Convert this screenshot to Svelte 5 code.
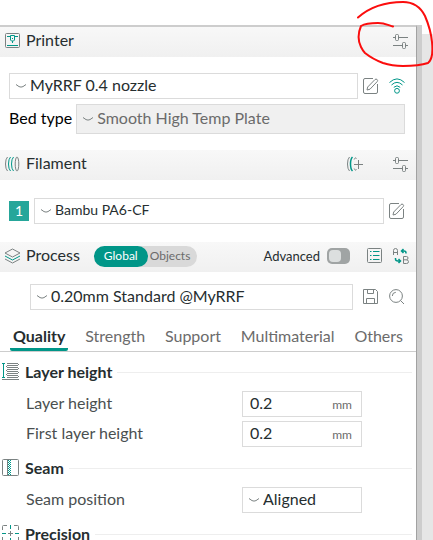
<script lang="ts">
	let printer = $state('MyRRF 0.4 nozzle');
	let bedType = $state('Smooth High Temp Plate');
	let filament = $state('Bambu PA6-CF');
	let preset = $state('0.20mm Standard @MyRRF');
	let seam = $state('Aligned');
	let layerHeight = $state('0.2');
	let firstLayerHeight = $state('0.2');
	let scope = $state('Global');
	let advanced = $state(false);
	let tab = $state('Quality');

	const tabs = ['Quality', 'Strength', 'Support', 'Multimaterial', 'Others'];
</script>

{#snippet chevron()}
	<svg width="12" height="8" viewBox="0 0 12 8"><path d="M1 2.5L4 4.6Q6 5.6 8 4.6L11 2.5" /></svg>
{/snippet}

{#snippet sliders()}
	<svg width="16" height="16" viewBox="0 0 16 16">
		<path d="M0 4.5H2.5M5.5 4.5H15M0 12.5H9.5M12.5 12.5H15" />
		<rect x="2.5" y="1.5" width="3" height="6" rx="1" />
		<rect x="9.5" y="9.5" width="3" height="6" rx="1" />
	</svg>
{/snippet}

{#snippet pencil()}
	<svg width="16" height="16" viewBox="0 0 16 16">
		<path d="M10 .5H2Q.5 .5 .5 2V14Q.5 15.5 2 15.5H13Q14.5 15.5 14.5 14V6" />
		<path d="M4 12L4.7 9L12 1.5Q13 .6 14.1 1.5Q15.1 2.6 14.2 3.6L7 11.2Z" />
	</svg>
{/snippet}

<div class="app">
	<main class="sidebar">
		<header class="bar">
			<svg width="16" height="16" viewBox="0 0 16 16">
				<rect x=".5" y=".5" width="14" height="14" rx="1" />
				<path class="teal" d="M2 3.5H5M10 3.5H13M2 12.5H13M5.5 2.5H9.5V7L8.5 8H6.5L5.5 7ZM7.5 8V10M7 5.5H8" />
			</svg>
			<h2>Printer</h2>
			<button class="icon end" aria-label="Printer settings">{@render sliders()}</button>
		</header>

		<section class="printer">
			<div class="row">
				<label class="select">
					{@render chevron()}
					<select bind:value={printer} aria-label="Printer"><option>MyRRF 0.4 nozzle</option></select>
				</label>
				<button class="icon" aria-label="Edit printer">{@render pencil()}</button>
				<button class="icon wifi" aria-label="Connection">
					<svg class="teal" width="16" height="16" viewBox="0 0 16 16">
						<path d="M.5 4.5Q8-2.7 15.5 4.5M2.5 7Q8 1.7 13.5 7M4.8 9.3Q8 6.3 11.2 9.3" />
						<circle cx="8" cy="12.8" r="2.4" />
					</svg>
				</button>
			</div>
			<div class="row bed">
				<label for="bed">Bed type</label>
				<div class="select muted">
					{@render chevron()}
					<select id="bed" bind:value={bedType}><option>Smooth High Temp Plate</option></select>
				</div>
			</div>
		</section>

		<header class="bar">
			<svg width="16" height="16" viewBox="0 0 16 16">
				<ellipse cx="12" cy="8" rx="1.8" ry="7" />
				<path d="M2.5 1Q.5 3 .5 8T2.5 15" />
				<path class="teal" d="M5.5 1Q3.5 3 3.5 8T5.5 15M8.5 1Q6.5 3 6.5 8T8.5 15" />
			</svg>
			<h2>Filament</h2>
			<button class="icon end add" aria-label="Add filament">
				<svg width="16" height="16" viewBox="0 0 16 16">
					<path d="M2.5 1Q.5 3 .5 8T2.5 15M9.5 2.5Q8.5 .5 7.2 3.5M7.2 12.5Q8.5 15.5 9.5 13.5M7 8.5H16M11.5 4V13" />
					<path class="teal bold" d="M5.5 1Q3.5 3 3.5 8T5.5 15" />
				</svg>
			</button>
			<button class="icon" aria-label="Filament settings">{@render sliders()}</button>
		</header>

		<section class="filament row">
			<span class="chip">1</span>
			<label class="select small">
				{@render chevron()}
				<select bind:value={filament} aria-label="Filament"><option>Bambu PA6-CF</option></select>
			</label>
			<button class="icon" aria-label="Edit filament">{@render pencil()}</button>
		</section>

		<header class="bar">
			<svg width="16" height="16" viewBox="0 0 16 16">
				<path d="M7.5 1L15 5L7.5 9L0 5Z" />
				<path class="teal" d="M0 8L7.5 12L15 8" />
				<path d="M0 11L7.5 15L15 11" />
			</svg>
			<h2>Process</h2>
			<div class="switch">
				{#each ['Global', 'Objects'] as name}
					<button class:active={scope === name} onclick={() => (scope = name)}>{name}</button>
				{/each}
			</div>
			<label class="advanced end">
				Advanced
				<input type="checkbox" bind:checked={advanced} />
			</label>
			<button class="icon list" aria-label="Parameter list">
				<svg width="16" height="16" viewBox="0 0 16 16">
					<rect x=".5" y=".5" width="14" height="14" rx="1" />
					<path class="teal" d="M3 3.5H4.5M6 3.5H12.5M3 7.5H4.5M6 7.5H12.5M3 11.5H4.5M6 11.5H12.5" />
				</svg>
			</button>
			<button class="icon" aria-label="Compare presets">
				<svg width="16" height="16" viewBox="0 0 16 16">
					<path d="M.5 7V2.5Q.5 .5 2.5 .5T4.5 2.5V7M.5 4.5H4.5M10.5 8.5V15.5H13.5Q15.5 15.5 15.5 13.7T13.5 11.8H10.5M13.5 11.8Q15 11.5 15 10T13.5 8.5H10.5" />
					<path class="teal bold" d="M13 5.5V5Q13 3 11 3H8.5M10.5 1L8.5 3L10.5 5M2.5 10V11Q2.5 13 5 13H7.5M5.5 11L7.5 13L5.5 15" />
				</svg>
			</button>
		</header>

		<section class="preset row">
			<label class="select">
				{@render chevron()}
				<select bind:value={preset} aria-label="Process preset"><option>0.20mm Standard @MyRRF</option></select>
			</label>
			<button class="icon" aria-label="Save preset">
				<svg width="16" height="16" viewBox="0 0 16 16">
					<path d="M.5 .5H12.5L14.5 2.5V14.5H.5ZM4.5 .5V4.5H10.5V.5M3.5 14.5V9.5H11.5V14.5" />
				</svg>
			</button>
			<button class="icon" aria-label="Search">
				<svg width="16" height="16" viewBox="0 0 16 16">
					<circle cx="7" cy="7" r="6.4" />
					<path d="M11.5 11.5L15 15M3.3 7Q3.3 3.5 6.8 3.3" />
				</svg>
			</button>
		</section>

		<nav class="tabs">
			{#each tabs as name}
				<button class:active={tab === name} onclick={() => (tab = name)}>{name}</button>
			{/each}
		</nav>

		<section class="options">
			<h3>
				<svg width="18" height="18" viewBox="0 0 18 18">
					<path class="teal" d="M0 .5H3M1.5 .5V14.5M0 14.5H3" />
					<path d="M0 16.5H17" />
					<path d="M5 .5H16M5 2.5H16M5 4.5H16M5 6.5H16M5 8.5H16M5 10.5H16M5 12.5H16M5 14.5H16M16.5 1V2M4.5 3V4M16.5 5V6M4.5 7V8M16.5 9V10M4.5 11V12M16.5 13V14" />
				</svg>
				<span>Layer height</span>
			</h3>
			<div class="field">
				<label for="layer">Layer height</label>
				<div class="number"><input id="layer" bind:value={layerHeight} /><span>mm</span></div>
			</div>
			<div class="field">
				<label for="first">First layer height</label>
				<div class="number"><input id="first" bind:value={firstLayerHeight} /><span>mm</span></div>
			</div>

			<h3>
				<svg width="18" height="18" viewBox="0 0 18 18">
					<rect x=".5" y=".5" width="16" height="16" rx="1" />
					<path d="M5.5 .5V16.5" />
					<path class="teal" stroke-dasharray="1 1" d="M6.5 1V16M8.5 1V16" />
					<path class="teal" stroke-dasharray="1 1" d="M7.5 2V16" />
				</svg>
				<span>Seam</span>
			</h3>
			<div class="field">
				<label for="seam">Seam position</label>
				<div class="select">
					{@render chevron()}
					<select id="seam" bind:value={seam}><option>Aligned</option></select>
				</div>
			</div>

			<h3>
				<svg width="18" height="18" viewBox="0 0 18 18">
					<path d="M.5 5V1.5Q.5 .5 1.5 .5H5M12 .5H15.5Q16.5 .5 16.5 1.5V5M.5 12V15.5Q.5 16.5 1.5 16.5H5M12 16.5H15.5Q16.5 16.5 16.5 15.5V12M6 8.5H11M8.5 6V11" />
					<path class="teal" d="M8.5 0V4M8.5 13V17M0 8.5H4M13 8.5H17" />
				</svg>
				<span>Precision</span>
			</h3>
		</section>
	</main>
	<div class="sash"></div>
	<div class="canvas"></div>

	<svg class="mark" width="80" height="70" viewBox="0 0 80 70">
		<path d="M5 17.5C18 6 34 2 50 2C61 2 68 8 72 16C75 23 78 32 79 42C80 52 79 60 75 63C66 66 58 66 50 66C40 66 36 65 30 63C22 60 17 57 12 53C10 51 9 49 8 47C5 41 5 33 8 26C13 23 19 23 25 23C31 23 35 25 40 26.5" />
	</svg>
</div>

<style>
	:global(body) {
		margin: 0;
		background: #fff;
	}

	.app {
		display: flex;
		position: relative;
		height: 100vh;
		padding-top: 25px;
		box-sizing: border-box;
		overflow: hidden;
		font-family: Lato, sans-serif;
		font-size: 16px;
		line-height: 18px;
		color: #262e30;
	}

	.sidebar {
		flex: 1;
		min-width: 0;
		border-top: 2px solid #cdcdcd;
		border-right: 1px solid #a2a2a2;
	}

	.sash {
		width: 5px;
		background: #cdcdcd;
	}

	.canvas {
		width: 11px;
		margin-top: 9px;
		background: #e6e6e6;
	}

	svg {
		display: block;
		flex: none;
		fill: none;
		stroke: #7b8282;
		stroke-width: 1;
	}

	.teal {
		stroke: #009688;
	}

	.bold {
		stroke-width: 1.5;
	}

	button, select, input {
		margin: 0;
		padding: 0;
		border: none;
		background: none;
		font: inherit;
		color: inherit;
	}

	.bar {
		display: flex;
		align-items: center;
		height: 30px;
		padding: 0 7px 2px 5px;
		box-sizing: border-box;
		background: linear-gradient(#f8f8f8, #f0f0f0);
	}

	h2 {
		margin: 0 0 0 5px;
		padding-bottom: 2px;
		font-size: 16px;
		font-weight: 400;
	}

	.end {
		margin-left: auto;
	}

	.add {
		margin-right: 30px;
	}

	.row {
		display: flex;
		align-items: center;
	}

	.row .icon {
		margin-left: 5px;
	}

	.select {
		display: flex;
		flex: 1;
		align-items: center;
		gap: 3px;
		height: 26px;
		padding: 0 5px;
		box-sizing: border-box;
		border: 1px solid #dbdbdb;
	}

	.select select {
		flex: 1;
		min-width: 0;
		padding-bottom: 2px;
		appearance: none;
		outline: none;
	}

	.small {
		font-size: 14px;
	}

	.muted {
		height: 30px;
		background: #f0f0f0;
		color: #6b6b6b;
	}

	.printer {
		padding: 16px 11px 16px 9px;
	}

	.row .wifi {
		margin-left: 10px;
	}

	.bed {
		gap: 4px;
		margin-top: 5px;
		color: #000;
	}

	.bed label {
		padding-bottom: 2px;
	}

	.filament {
		padding: 18px 11px 18px 9px;
	}

	.chip {
		width: 20px;
		margin-right: 5px;
		background: #26a69a;
		color: #fff;
		font-size: 14px;
		line-height: 20px;
		text-align: center;
	}

	.switch {
		display: flex;
		margin-left: 14px;
		border-radius: 11px;
		background: #d9d9d9;
		color: #6b6b6b;
		font-size: 12px;
	}

	.switch button {
		height: 21px;
		padding: 0 7px 0 2px;
	}

	.switch .active {
		padding: 0 10px;
		border-radius: 11px;
		background: #009688;
		color: #fff;
	}

	.advanced {
		display: flex;
		align-items: center;
		gap: 7px;
		font-size: 13px;
	}

	.advanced input {
		width: 23px;
		height: 16px;
		padding: 2px;
		box-sizing: border-box;
		appearance: none;
		border-radius: 5px;
		background: #a0a4a4;
	}

	.advanced input::before {
		content: '';
		display: block;
		width: 12px;
		height: 12px;
		border-radius: 4px;
		background: #dcdfdf;
	}

	.advanced input:checked::before {
		margin-left: auto;
	}

	.list {
		margin: 0 10px 0 17px;
	}

	.preset {
		padding: 12px 11px 12px 30px;
	}

	.preset .icon {
		margin-left: 10px;
	}

	.tabs {
		display: flex;
		justify-content: space-between;
		padding: 0 10px;
		border-bottom: 1px solid #cdcdcd;
		color: #6b6b6b;
	}

	.tabs button {
		height: 29px;
		padding: 2px 3px 0;
		border-bottom: 3px solid transparent;
	}

	.tabs .active {
		border-color: #009688;
		border-radius: 2px;
		color: #262e30;
		font-weight: 700;
	}

	.options {
		padding: 10px 4px 0 2px;
	}

	h3 {
		display: flex;
		align-items: center;
		gap: 5px;
		height: 20px;
		margin: 0 0 9px;
		font-size: 16px;
	}

	h3 span {
		padding-bottom: 1px;
	}

	h3::after {
		content: '';
		flex: 1;
		height: 1px;
		background: #eee;
	}

	.field {
		display: flex;
		align-items: center;
		margin-bottom: 4px;
		padding-left: 24px;
	}

	.field + h3 {
		margin-top: 11px;
	}

	.field label {
		width: 216px;
		padding-bottom: 2px;
		color: #4a4f50;
	}

	.field .select {
		flex: none;
		width: 120px;
	}

	.number {
		display: flex;
		align-items: baseline;
		width: 120px;
		height: 26px;
		padding: 2px 9px 0 7px;
		box-sizing: border-box;
		border: 1px solid #dbdbdb;
	}

	.number input {
		flex: 1;
		min-width: 0;
		outline: none;
	}

	.number span {
		color: #6b6b6b;
		font-size: 12px;
	}

	/* pen circle round the printer settings button */
	.mark {
		position: absolute;
		top: 0;
		right: 0;
		pointer-events: none;
	}

	.mark path {
		stroke: #fb0d0d;
		stroke-width: 2;
		stroke-linecap: round;
	}
</style>
